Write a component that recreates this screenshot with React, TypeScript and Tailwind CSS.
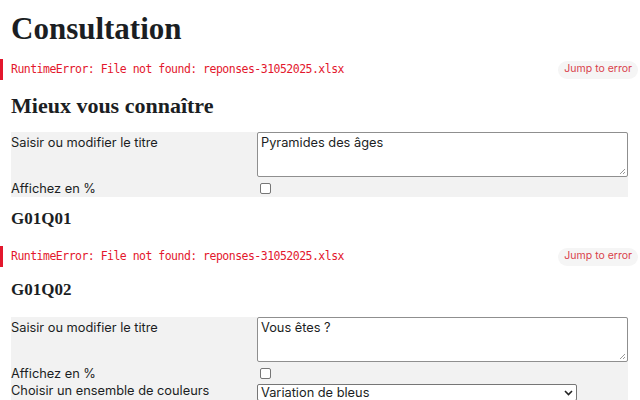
import React from 'react'

const serif = { fontFamily: '"Liberation Serif", "DejaVu Serif", serif' }

function ErrorLine() {
  return (
    <div className="flex items-center justify-between h-[21px] border-l-[3px] border-[#e3172d] pl-[8px] pr-[2px]">
      <span className="text-[11.5px] tracking-[-0.52px] text-[#e3172d]" style={{ fontFamily: '"DejaVu Sans Mono", "Liberation Mono", monospace' }}>
        RuntimeError: File not found: reponses-31052025.xlsx
      </span>
      <button className="h-[18px] px-[6px] rounded-full bg-[#f5f5f5] text-[10.5px] text-[#d9414b] leading-none">Jump to error</button>
    </div>
  )
}

function Row({ label, children, h, lp = 'pt-[3px]' }: { label: string; children: React.ReactNode; h: string; lp?: string }) {
  return (
    <div className={`flex items-start ${h}`}>
      <label className={`w-[246px] shrink-0 ${lp} text-[12.8px] leading-[15px] text-[#1b1e23]`}>{label}</label>
      <div className="flex-1 min-w-0">{children}</div>
    </div>
  )
}

function Checkbox() {
  return <div className="mt-[5px] ml-[3px] w-[11px] h-[11px] border border-[#767676] rounded-[2px] bg-white" />
}

function TitleArea({ value }: { value: string }) {
  return (
    <div className="relative h-[45px] border border-[#8f8f8f] rounded-[2px] bg-white px-[3px] py-[2px] text-[12.8px] leading-[15px] text-[#1b1e23]">
      {value}
      <svg className="absolute right-[1px] bottom-[1px]" width="7" height="7" viewBox="0 0 7 7">
        <path d="M6 1 L1 6 M6 4 L4 6" stroke="#999" strokeWidth="1" />
      </svg>
    </div>
  )
}

export default function App() {
  return (
    <div className="w-[640px] h-[400px] overflow-hidden bg-white" style={{ fontFamily: 'Inter, "Noto Sans", sans-serif' }}>
      <div className="pl-[11px] pr-[12px]">
        <h1 className="pt-[10px] h-[59px] text-[31px] font-bold text-[#1b1e23] leading-[38px]" style={serif}>Consultation</h1>
      </div>
      <ErrorLine />
      <div className="pl-[11px] pr-[12px]">
        <h2 className="mt-[12px] h-[40px] text-[22px] font-bold text-[#1b1e23] leading-[27px]" style={serif}>Mieux vous connaître</h2>
        <div className="bg-[#f2f2f2]">
          <Row label="Saisir ou modifier le titre" h="h-[45px]"><TitleArea value="Pyramides des âges" /></Row>
          <Row label="Affichez en %" h="h-[20px] pt-[1px]"><Checkbox /></Row>
        </div>
        <h3 className="mt-[12px] h-[37px] text-[17px] font-bold text-[#1b1e23] leading-[20px]" style={serif}>G01Q01</h3>
      </div>
      <ErrorLine />
      <div className="pl-[11px] pr-[12px]">
        <h3 className="mt-[13px] h-[37px] text-[17px] font-bold text-[#1b1e23] leading-[20px]" style={serif}>G01Q02</h3>
        <div className="bg-[#f2f2f2]">
          <Row label="Saisir ou modifier le titre" h="h-[45px]"><TitleArea value="Vous êtes ?" /></Row>
          <Row label="Affichez en %" h="h-[22px] pt-[1px]"><Checkbox /></Row>
          <Row label="Choisir un ensemble de couleurs" h="h-[20px]" lp="pt-0 -mt-[1px]">
            <div className="flex items-center justify-between w-[320px] h-[17px] border border-[#767676] rounded-[2px] bg-white px-[3px] text-[12.8px] leading-[15px] text-[#1b1e23]">
              <span>Variation de bleus</span>
              <svg width="9" height="6" viewBox="0 0 9 6"><path d="M1 1 L4.5 4.5 L8 1" fill="none" stroke="#222" strokeWidth="1.6" /></svg>
            </div>
          </Row>
        </div>
      </div>
    </div>
  )
}
